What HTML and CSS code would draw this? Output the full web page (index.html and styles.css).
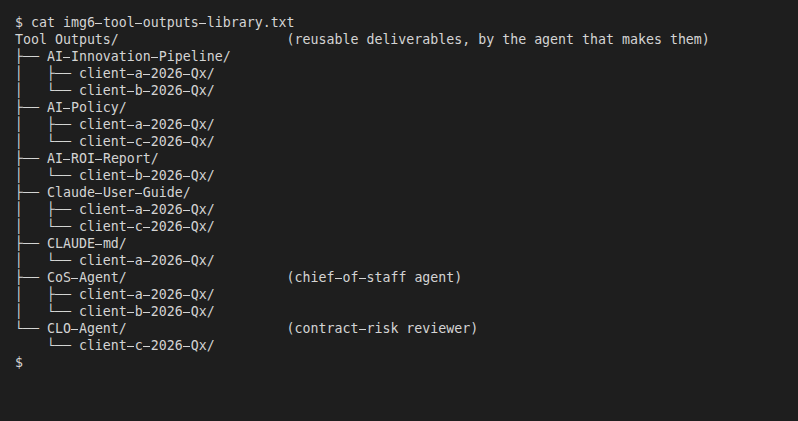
FILE: index.html
```html
<!DOCTYPE html>
<html>
<head>
<meta charset="utf-8">
<link rel="stylesheet" href="styles.css">
</head>
<body>
<pre class="term">$ cat img6<span class="h">-</span>tool<span class="h">-</span>outputs<span class="h">-</span>library.txt
Tool Outputs/                     (reusable deliverables, by the agent that makes them)
├── AI<span class="h">-</span>Innovation<span class="h">-</span>Pipeline/
│   ├── client<span class="h">-</span>a<span class="h">-</span>2026<span class="h">-</span>Qx/
│   └── client<span class="h">-</span>b<span class="h">-</span>2026<span class="h">-</span>Qx/
├── AI<span class="h">-</span>Policy/
│   ├── client<span class="h">-</span>a<span class="h">-</span>2026<span class="h">-</span>Qx/
│   └── client<span class="h">-</span>c<span class="h">-</span>2026<span class="h">-</span>Qx/
├── AI<span class="h">-</span>ROI<span class="h">-</span>Report/
│   └── client<span class="h">-</span>b<span class="h">-</span>2026<span class="h">-</span>Qx/
├── Claude<span class="h">-</span>User<span class="h">-</span>Guide/
│   ├── client<span class="h">-</span>a<span class="h">-</span>2026<span class="h">-</span>Qx/
│   └── client<span class="h">-</span>c<span class="h">-</span>2026<span class="h">-</span>Qx/
├── CLAUDE<span class="h">-</span>md/
│   └── client<span class="h">-</span>a<span class="h">-</span>2026<span class="h">-</span>Qx/
├── CoS<span class="h">-</span>Agent/                    (chief<span class="h">-</span>of<span class="h">-</span>staff agent)
│   ├── client<span class="h">-</span>a<span class="h">-</span>2026<span class="h">-</span>Qx/
│   └── client<span class="h">-</span>b<span class="h">-</span>2026<span class="h">-</span>Qx/
└── CLO<span class="h">-</span>Agent/                    (contract<span class="h">-</span>risk reviewer)
    └── client<span class="h">-</span>c<span class="h">-</span>2026<span class="h">-</span>Qx/
$</pre>
</body>
</html>
```
FILE: styles.css
```css
html, body {
  margin: 0;
  padding: 0;
  background: #1e1e1e;
  height: 100%;
}
.term {
  margin: 0;
  padding: 14px 15px;
  font-family: "DejaVu Sans Mono", monospace;
  font-size: 13.2879px;
  line-height: 17px;
  color: #d4d4d4;
}
/* full-cell hyphen, like the reference terminal font */
.h {
  color: transparent;
  background-image: linear-gradient(#d4d4d4, #d4d4d4);
  background-repeat: no-repeat;
  background-size: 7px 1px;
  background-position: 0.5px 8.24px;
}
```
